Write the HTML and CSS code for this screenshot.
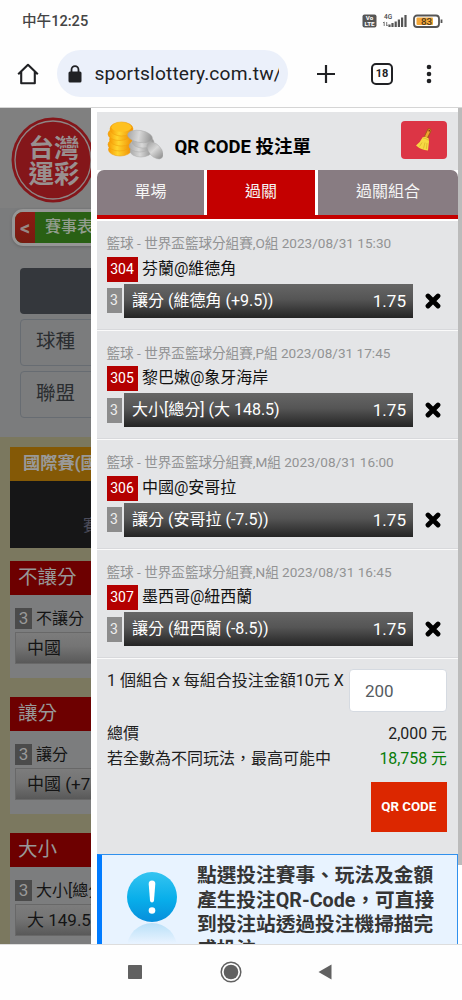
FILE: index.html
```html
<!DOCTYPE html>
<html lang="zh-Hant">
<head>
<meta charset="utf-8">
<meta name="viewport" content="width=device-width">
<title>QR CODE 投注單</title>
<link rel="stylesheet" href="styles.css">
</head>
<body>
<header class="status">
  <span class="clock">中午12:25</span>
  <svg class="status-icons" width="84" height="16" viewBox="0 0 84 16">
    <rect x="0.5" y="1.5" width="14" height="13" rx="2" fill="#555"/>
    <text x="7.5" y="7.4" class="tiny-white" text-anchor="middle">Vo</text>
    <text x="7.5" y="13.4" class="tiny-white" text-anchor="middle">LTE</text>
    <text x="22" y="5.6" class="tiny-dark">4G</text>
    <path d="M22.2 9v4M21 10l1.2-1.2M24.7 9v4M24.7 13l1.2-1.2" stroke="#666" stroke-width=".9" fill="none"/>
    <path d="M27.5 14v-2.5M30.5 14v-4M33.700 14V8.500M36.900 14V6.500M40.100 14V4.500M43.500 14V2" stroke="#555" stroke-width="2.200"/>
    <rect x="52" y="2.500" width="25" height="11.500" rx="3" fill="#fff" stroke="#555" stroke-width="1.800"/>
    <rect x="54.500" y="4.600" width="16.500" height="7.500" rx="1" fill="#f3a738"/>
    <path d="M79.500 6.500v3.500" stroke="#555" stroke-width="1.800"/>
    <text x="64.500" y="11.800" class="battery" text-anchor="middle">83</text>
  </svg>
</header>
<nav class="browser">
  <svg class="home" width="22" height="22" viewBox="0 0 22 22"><path d="M1.200 11.200 11 1.800l9.800 9.400M4.200 9v11.200h13.600V9" fill="none" stroke="#202124" stroke-width="2.100" stroke-linejoin="round"/></svg>
  <div class="url">
    <svg width="14" height="18" viewBox="0 0 14 18"><path d="M3.500 7V4.700a3.500 3.500 0 0 1 7 0V7" fill="none" stroke="#202124" stroke-width="1.800"/><rect x=".5" y="6.500" width="13" height="11" rx="1.500" fill="#202124"/></svg>
    <span class="address">sportslottery.com.tw/</span>
  </div>
  <svg class="plus" width="20" height="20" viewBox="0 0 20 20"><path d="M10 1v18M1 10h18" stroke="#202124" stroke-width="2.200"/></svg>
  <span class="tab-count">18</span>
  <svg class="more" width="6" height="20" viewBox="0 0 6 20"><g fill="#202124"><circle cx="3" cy="3" r="2.300"/><circle cx="3" cy="10" r="2.300"/><circle cx="3" cy="17" r="2.300"/></g></svg>
</nav>

<main class="screen">
  <aside class="page">
    <div class="brand">
      <svg width="84" height="86" viewBox="0 0 84 86">
        <ellipse cx="42" cy="43" rx="41.500" ry="42.500" fill="#84161a"/>
        <ellipse cx="42" cy="43" rx="38" ry="39" fill="none" stroke="#8e8686" stroke-width="1.300"/>
        <text x="43" y="40" class="logo-text" text-anchor="middle">台灣</text>
        <text x="43" y="66" class="logo-text" text-anchor="middle">運彩</text>
      </svg>
    </div>
    <div class="ribbon"><span class="back">&lt;</span><span class="sched">賽事表</span></div>
    <div class="filters">
      <div class="filter-head"></div>
      <div class="filter">球種</div>
      <div class="filter">聯盟</div>
    </div>
    <div class="odds">
      <div class="league">國際賽(國</div>
      <div class="match">賽</div>
      <section class="market">
        <h3>不讓分</h3>
        <p><b>3</b>不讓分</p>
        <div class="pick">中國</div>
      </section>
      <section class="market">
        <h3>讓分</h3>
        <p><b>3</b>讓分</p>
        <div class="pick">中國 (+7.5)</div>
      </section>
      <section class="market">
        <h3>大小</h3>
        <p><b>3</b>大小[總分]</p>
        <div class="pick">大 149.5</div>
      </section>
    </div>
  </aside>

  <div class="slip">
    <div class="slip-head">
      <svg class="coins" width="56" height="40" viewBox="0 0 56 40">
        <defs>
          <linearGradient id="gold" x1="0" x2="1"><stop offset="0" stop-color="#f79a05"/><stop offset=".4" stop-color="#ffd52e"/><stop offset="1" stop-color="#ef8d04"/></linearGradient>
          <linearGradient id="silver" x1="0" x2="1"><stop offset="0" stop-color="#a8a8a8"/><stop offset=".45" stop-color="#d8d8d8"/><stop offset="1" stop-color="#919191"/></linearGradient>
        </defs>
        <g fill="url(#gold)" stroke="#f2a20c" stroke-width=".6">
          <ellipse cx="13" cy="28.500" rx="11.500" ry="6.500"/><ellipse cx="12.500" cy="23.500" rx="11.500" ry="6.500"/><ellipse cx="14" cy="18.500" rx="11.500" ry="6.500"/><ellipse cx="12.500" cy="13" rx="11.500" ry="6.500"/><ellipse cx="14.500" cy="8" rx="11.500" ry="7"/>
        </g>
        <ellipse cx="14.500" cy="6.300" rx="10" ry="4.500" fill="#ffc11f"/>
        <g fill="url(#silver)" stroke="#aaa" stroke-width=".5">
          <ellipse cx="34" cy="30" rx="11" ry="6"/><ellipse cx="33" cy="25" rx="11" ry="6"/><ellipse cx="36" cy="21" rx="11" ry="6"/><ellipse cx="33" cy="15.500" rx="12.500" ry="6" transform="rotate(10 33 15.500)"/>
          <ellipse cx="48" cy="29.500" rx="10" ry="6" transform="rotate(48 48 29.500)"/>
        </g>
      </svg>
      <h1>QR CODE 投注單</h1>
      <div class="clear">
        <svg width="18" height="24" viewBox="0 0 18 24">
          <path d="M11.500 8.500 14.200 2.500" stroke="#a55a19" stroke-width="4.400" stroke-linecap="round"/>
          <path d="M11.500 8 14.200 2.500" stroke="#f0a52e" stroke-width="2.600" stroke-linecap="round"/>
          <circle cx="14.300" cy="2.700" r=".9" fill="#8b351b"/>
          <path d="M7.500 9.500q2.500-2 6 .8l.5 3.200-1 9Q6 22 1 17.500 5.500 14 7.500 9.500Z" fill="#f7d943"/>
          <path d="M7.500 9.800q3.500.2 6 2.500M7 14.500l-2.500 4M10 14.500l-1.500 6M12 15l-.7 6" stroke="#d6b02a" stroke-width=".7" fill="none"/>
        </svg>
      </div>
    </div>
    <div class="tabs"><div class="tab first">單場</div><div class="tab active">過關</div><div class="tab last">過關組合</div></div>

    <article class="bet">
      <div class="meta">籃球 - 世界盃籃球分組賽,O組 2023/08/31 15:30</div>
      <div class="teams"><b>304</b>芬蘭@維德角</div>
      <div class="line"><i>3</i><div class="bar"><span>讓分 (維德角 (+9.5))</span><em>1.75</em></div><svg class="remove" width="16" height="16" viewBox="0 0 16 16"><path d="m3 3 10 10M13 3 3 13"/></svg></div>
    </article>
    <article class="bet">
      <div class="meta">籃球 - 世界盃籃球分組賽,P組 2023/08/31 17:45</div>
      <div class="teams"><b>305</b>黎巴嫩@象牙海岸</div>
      <div class="line"><i>3</i><div class="bar"><span>大小[總分] (大 148.5)</span><em>1.75</em></div><svg class="remove" width="16" height="16" viewBox="0 0 16 16"><path d="m3 3 10 10M13 3 3 13"/></svg></div>
    </article>
    <article class="bet">
      <div class="meta">籃球 - 世界盃籃球分組賽,M組 2023/08/31 16:00</div>
      <div class="teams"><b>306</b>中國@安哥拉</div>
      <div class="line"><i>3</i><div class="bar"><span>讓分 (安哥拉 (-7.5))</span><em>1.75</em></div><svg class="remove" width="16" height="16" viewBox="0 0 16 16"><path d="m3 3 10 10M13 3 3 13"/></svg></div>
    </article>
    <article class="bet">
      <div class="meta">籃球 - 世界盃籃球分組賽,N組 2023/08/31 16:45</div>
      <div class="teams"><b>307</b>墨西哥@紐西蘭</div>
      <div class="line"><i>3</i><div class="bar"><span>讓分 (紐西蘭 (-8.5))</span><em>1.75</em></div><svg class="remove" width="16" height="16" viewBox="0 0 16 16"><path d="m3 3 10 10M13 3 3 13"/></svg></div>
    </article>

    <div class="total">
      <div class="stake"><span>1 個組合 x 每組合投注金額10元 X</span><div class="amount">200</div></div>
      <div class="sum"><span>總價</span><span>2,000 元</span></div>
      <div class="sum"><span>若全數為不同玩法，最高可能中</span><span class="win">18,758 元</span></div>
      <div class="submit">QR CODE</div>
    </div>
    <div class="notice">
      <svg width="52" height="72" viewBox="0 0 52 72">
        <defs>
          <linearGradient id="blue" x1="0" x2="0" y1="0" y2="1"><stop offset="0" stop-color="#34c4f1"/><stop offset=".55" stop-color="#08aeea"/><stop offset="1" stop-color="#078edb"/></linearGradient>
          <linearGradient id="fade" x1="0" x2="0" y1="0" y2="1"><stop offset="0" stop-color="#b9e0f8"/><stop offset=".4" stop-color="#e8f3ff"/></linearGradient>
        </defs>
        <circle cx="26" cy="77" r="25" fill="url(#fade)"/>
        <circle cx="26" cy="26" r="25" fill="url(#blue)"/>
        <path d="M26 9.500c2.300 0 3.400 1.300 3.300 3.500L28 29.500c-.2 2.500-3.800 2.500-4 0L22.700 13c-.1-2.200 1-3.500 3.300-3.500Z" fill="#fff"/>
        <circle cx="26" cy="39.500" r="3.300" fill="#fff"/>
      </svg>
      <p>點選投注賽事、玩法及金額<br>產生投注QR-Code，可直接<br>到投注站透過投注機掃描完<br>成投注。</p>
    </div>
  </div>
  <div class="scrollbar"><div class="thumb"></div></div>
</main>

<footer class="keys">
  <svg width="14" height="14" viewBox="0 0 14 14"><rect width="14" height="14" rx=".8" fill="#616161"/></svg>
  <svg width="22" height="22" viewBox="0 0 22 22"><circle cx="11" cy="11" r="9.800" fill="#fff" stroke="#616161" stroke-width="1.500"/><circle cx="11" cy="11" r="7.300" fill="#616161"/></svg>
  <svg width="14" height="16" viewBox="0 0 14 16"><path d="M13.500.5v15L.5 8Z" fill="#616161"/></svg>
</footer>
</body>
</html>
```
FILE: styles.css
```css
* { box-sizing: border-box; }
body {
  margin: 0; width: 462px; height: 1000px; overflow: hidden;
  display: flex; flex-direction: column; background: #fefefe;
  font: 16px/24px Roboto, "Noto Sans CJK TC", sans-serif; color: #202124;
}
svg { display: block; flex: none; }
h1, h3, p { margin: 0; font-weight: 400; }
b, i, em { font-style: normal; font-weight: 400; }

.status { flex: none; height: 41px; padding: 0 20px 0 22px; display: flex; justify-content: space-between; align-items: center; }
.clock { font-size: 14.6px; font-weight: 500; color: #444; }
.status-icons { margin-right: -4px; }
.tiny-white { font: 700 6.2px Roboto, sans-serif; fill: #fff; }
.tiny-dark { font: 500 6.5px Roboto, sans-serif; fill: #444; }
.battery { font: 500 9.8px Roboto, sans-serif; fill: #503a1c; }

.browser { flex: none; height: 67px; border-bottom: 1px solid #d5d5d5; padding: 9px 0 10px 17px; display: flex; align-items: center; }
.url { width: 231px; height: 47px; margin-left: 18px; padding-left: 11px; border-radius: 24px; background: #ebf0fa; display: flex; align-items: center; gap: 12.5px; }
.address { width: 184px; overflow: hidden; white-space: nowrap; font-size: 19.2px; line-height: 28px; letter-spacing: .14px; }
.plus { margin-left: 27.5px; }
.tab-count { margin-left: 35.5px; width: 22px; height: 22px; border: 2px solid #202124; border-radius: 5px; font-size: 11px; font-weight: 700; line-height: 18px; text-align: center; }
.more { margin-left: 33px; }

.screen { flex: none; height: 836px; display: grid; grid-template-columns: 91px 367px 4px; overflow: hidden; }
.page { overflow: hidden; white-space: nowrap; background: #7b7c7d; color: #141414; }
.brand { height: 100px; padding: 9px 0 0 11px; background: #808080; }
.brand svg { margin-right: -20px; }
.logo-text { font: 700 25.5px "Noto Sans CJK TC", sans-serif; fill: #999090; }
.ribbon { width: 140px; height: 37px; margin: 1px 0 0 12px; border: 3px solid #969696; border-radius: 11px; overflow: hidden; display: flex; background: #296014; line-height: 29px; color: #929d8e; box-shadow: 0 1px 3px #5558; }
.back { width: 20px; background: linear-gradient(#8c1912, #771b10); text-align: center; font-size: 20px; line-height: 33px; font-weight: 700; color: #978884; }
.sched { padding-left: 10px; font-weight: 500; }
.filters { height: 191px; padding: 22px 0 0 20px; }
.filter-head { width: 100px; height: 46px; border-radius: 4px; background: #34373c; }
.filter { width: 100px; height: 47px; margin-top: 5px; padding-left: 15px; border: 1px solid #676c72; border-radius: 4px; font-size: 19.5px; line-height: 43px; color: #2a2d30; }
.odds { width: 160px; padding: 10px 0 0 10px; background: #7b785f; height: 510px; }
.league { height: 34px; padding-left: 13px; background: #845906; color: #999; font-size: 17.2px; line-height: 33px; font-weight: 700; }
.match { height: 67px; padding: 33px 0 0 73px; background: #161617; color: #4d4d5b; font-size: 16px; }
.market { margin-top: 13px; height: 117px; background: #7c7d7e; }
.market + .market { margin-top: 19px; }
.market h3 { height: 34px; padding-left: 8px; background: #6d0000; color: #989898; font-size: 19.5px; line-height: 34px; }
.market p { display: flex; align-items: center; height: 37px; padding: 10px 0 0 5px; gap: 4px; color: #141414; }
.market p b { width: 17px; height: 21px; background: #4b4b4b; color: #999; line-height: 21px; text-align: center; font-size: 17px; }
.pick { height: 32px; margin-left: 5px; padding-left: 11px; border: 1px solid #686868; border-right: 0; background: linear-gradient(#7c7c7c, #747474 45%, #595959); font-size: 17px; line-height: 30px; }

.slip { background: #fff; padding: 4px 0 0 6px; overflow: hidden; color: #1e1e1e; white-space: nowrap; }
.slip-head { height: 58px; background: #e4e5e7; padding: 9px 11px 0 10px; display: flex; }
.slip-head h1 { margin: 14px 0 0 11.5px; flex: 1; color: #000; font-size: 18.5px; font-weight: 700; line-height: 24px; }
.clear { width: 46px; height: 38px; border-radius: 4px; background: #dc3545; display: grid; place-items: center; }
.tabs { height: 51px; display: grid; grid-template-columns: 107px 108px 140px; gap: 3px; border-bottom: 2px solid #fff; background: linear-gradient(#fff 45px, #c40000 45px); }
.tab { height: 45px; background: #887c82; color: #f5f5f5; text-align: center; line-height: 43px; }
.tab.first { border-top-left-radius: 7px; }
.tab.last { border-top-right-radius: 7px; }
.tab.active { height: 49px; background: #c40000; }
.bet { height: 109.5px; padding: 10px 10px 0 9.5px; background: #e4e5e7; border-bottom: 1.5px solid #fafafa; box-shadow: inset 0 -1px #d8d9dc; }
.meta { height: 25.5px; color: #929394; font-size: 13.59px; line-height: 24px; }
.teams { display: flex; gap: 4.5px; height: 25px; color: #111; line-height: 23px; }
.teams b { width: 31px; height: 25px; background: #b40000; color: #fff; text-align: center; font-size: 14px; line-height: 25px; }
.line { margin-top: 2px; display: flex; align-items: center; }
.line i { width: 15px; height: 25px; background: #8c8c8c; color: #eee; text-align: center; font-size: 14px; line-height: 25px; }
.bar { margin-left: 2.5px; width: 289px; height: 34px; padding: 0 7px 0 8px; display: flex; justify-content: space-between; background: linear-gradient(#666, #555 45%, #242424); color: #fff; line-height: 33px; }
.bar em { font-size: 17.1px; line-height: 35px; }
.remove { margin-left: 12px; fill: none; stroke: #000; stroke-width: 4.8; stroke-linecap: round; }
.total { height: 195px; padding: 10px 11px 0 10px; background: #e4e5e7; }
.stake { display: flex; justify-content: space-between; height: 53px; }
.stake span { line-height: 23px; }
.amount { width: 98px; height: 43px; border: 1px solid #d5dae1; border-radius: 4px; background: #fff; padding-left: 15px; color: #555b61; font-size: 17px; line-height: 42px; }
.sum { display: flex; justify-content: space-between; height: 25px; line-height: 24px; }
.sum span:last-child { font-size: 15.9px; }
.win { color: #087b08; }
.submit { width: 76.5px; height: 50px; margin: 10px 0 0 auto; background: #dc2700; color: #fff; font-size: 13.3px; line-height: 49px; font-weight: 700; text-align: center; }
.notice { height: 140px; border: 1px solid #3090ed; border-left: 5px solid #007bff; background: #e8f3ff; padding: 9px 0 0 24px; display: flex; }
.notice svg { margin-top: 7px; }
.notice p { margin-left: 19px; font-size: 19.7px; line-height: 24.7px; font-weight: 700; color: #353535; }
.scrollbar { background: #fff; }
.thumb { height: 757px; background: #bbb; }

.keys { flex: none; height: 56px; border-top: 1px solid #ddd; padding: 0 0 1px 128px; display: flex; align-items: center; gap: 78px; }
.keys svg:last-child { margin-left: -2px; }
```
